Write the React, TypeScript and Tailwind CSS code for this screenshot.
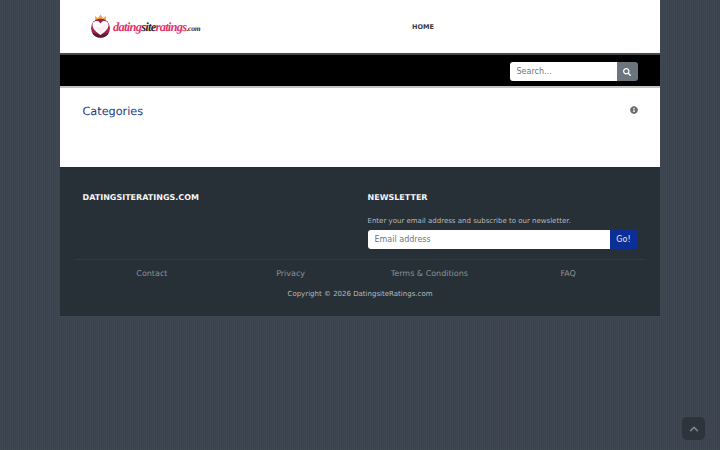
import React from 'react';
import { FaChevronUp, FaInfoCircle, FaSearch } from 'react-icons/fa';

const footerLinks = ['Contact', 'Privacy', 'Terms & Conditions', 'FAQ'];

const Logo: React.FC = () => (
  <div className="flex items-center">
    <svg width="23" height="24" viewBox="0 0 23 24" className="shrink-0">
      <path d="M6 7 L6 2 L9 4 L11.5 0.5 L14 4 L17 2 L17 7 Z" fill="#f0b23c" />
      <circle cx="11.5" cy="14" r="9.5" fill="#a0244f" />
      <path d="M3 18.5 A9.5 9.5 0 0 0 20 18.5 L11.5 21 Z" fill="#5c1a30" />
      <path d="M11.5 21 C6 17 3.5 14.5 3.5 11 C3.5 8 6 6.5 8.2 7 C9.8 7.3 10.8 8.3 11.5 9.6 C12.2 8.3 13.2 7.3 14.8 7 C17 6.5 19.5 8 19.5 11 C19.5 14.5 17 17 11.5 21 Z" fill="#ffffff" />
      <path d="M11.5 19 C8 16.5 6.5 14.5 6.5 12.5 C9 14 12 13.5 15 11 C16 10.5 17 11 16.8 12.5 C16 15 14.5 17 11.5 19 Z" fill="#fbeff2" />
    </svg>
    <span className="ml-[1px] mt-[2px] font-['Liberation_Serif',serif] text-[12.5px] font-bold italic leading-none tracking-[-0.75px] text-[#e0356f]">
      dating<span className="text-[#3d1a28]">site</span>ratings<span className="text-[7.5px] tracking-[-0.2px] text-[#3d1a28]">.com</span>
    </span>
  </div>
);

export default function App() {
  return (
    <div className="relative min-h-[450px] bg-[#3d4550] bg-[repeating-linear-gradient(90deg,rgba(255,255,255,0.02)_0px,rgba(255,255,255,0.02)_1px,transparent_1px,transparent_2px),repeating-linear-gradient(0deg,rgba(0,0,0,0.05)_0px,rgba(0,0,0,0.05)_1px,transparent_1px,transparent_2px)] font-['DejaVu_Sans',sans-serif] [text-rendering:geometricPrecision]">
      <div className="mx-auto w-[600px]">
        <header className="flex h-[55px] items-start border-b-2 border-[#444649] bg-white">
          <div className="ml-[29px] mt-[14px] w-[323px]">
            <Logo />
          </div>
          <a className="mt-[22px] text-[6.5px] font-bold leading-[10px] text-[#333a40]">HOME</a>
        </header>

        <div className="flex h-[33px] items-start justify-end border-b-2 border-[#c4c4c4] bg-black pr-[22.5px] pt-[7px]">
          <div className="flex h-[19px]">
            <input
              placeholder="Search..."
              className="w-[107px] rounded-l-[3px] bg-white px-[7px] text-[8px] text-[#495057] outline-none placeholder:text-[#6c757d]"
            />
            <button className="flex w-[21px] items-center justify-center rounded-r-[3px] bg-[#6c757d] text-white">
              <FaSearch size={8} />
            </button>
          </div>
        </div>

        <main className="flex h-[79px] items-start justify-between bg-white px-[22.5px] pt-[16px]">
          <h2 className="text-[11.25px] leading-[16px] text-[#1d3b84]">Categories</h2>
          <FaInfoCircle size={8} className="mt-[2px] text-[#6c6c6c]" />
        </main>

        <footer className="h-[149px] bg-[#283037] px-[15px] pt-[25px]">
          <div className="flex h-[67px] px-[7.5px]">
            <div className="w-[285px]">
              <h3 className="text-[8px] font-bold leading-[11px] text-[#f4f5f6]">DATINGSITERATINGS.COM</h3>
            </div>
            <div className="flex-1">
              <h3 className="text-[8px] font-bold leading-[11px] text-[#f4f5f6]">NEWSLETTER</h3>
              <p className="mt-[13px] text-[7px] leading-[10px] text-[#b6babd]">
                Enter your email address and subscribe to our newsletter.
              </p>
              <div className="mt-[4px] flex h-[19px]">
                <input
                  placeholder="Email address"
                  className="min-w-0 flex-1 rounded-l-[3px] bg-white px-[7px] text-[8px] text-[#495057] outline-none placeholder:text-[#6c757d]"
                />
                <button className="w-[28px] rounded-r-[3px] bg-[#0b2f94] text-[8px] text-[#e4e8f2]">Go!</button>
              </div>
            </div>
          </div>

          <div className="border-t border-[#323a42] px-[7.5px] pt-[8px]">
            <div className="grid grid-cols-4">
              {footerLinks.map(link => (
                <a key={link} className="text-center text-[8px] leading-[11px] text-[#8b9095]">
                  {link}
                </a>
              ))}
            </div>
          </div>
          <p className="mt-[10px] text-center text-[7px] leading-[10px] text-[#b6babd]">
            Copyright © 2026 DatingsiteRatings.com
          </p>
        </footer>
      </div>

      <button className="absolute bottom-[10px] right-[15px] flex h-[23px] w-[23px] items-center justify-center rounded-[5px] bg-[#2e343c] text-[#7c8288]">
        <FaChevronUp size={10} />
      </button>
    </div>
  );
}
